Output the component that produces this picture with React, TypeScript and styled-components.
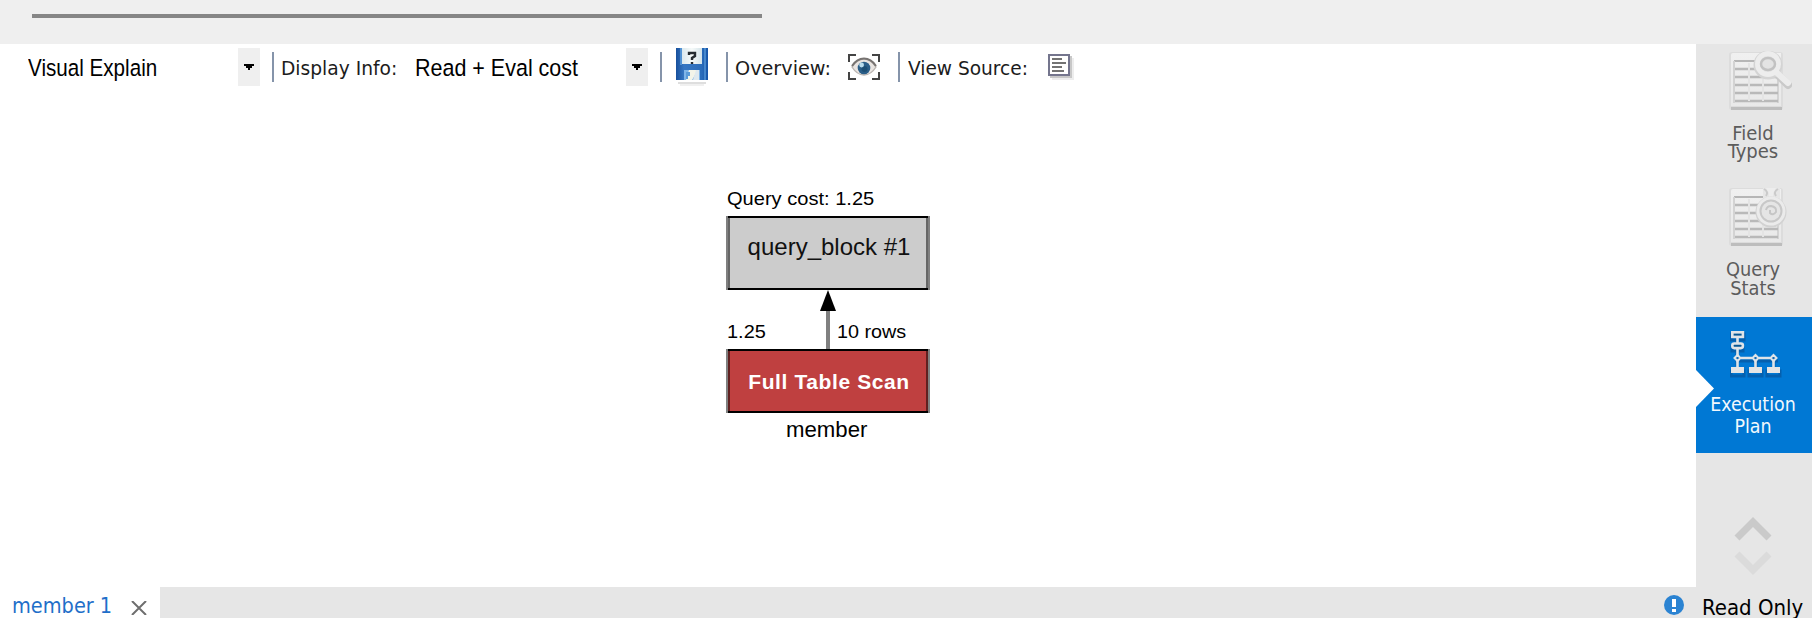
import React from 'react';
import styled, { createGlobalStyle } from 'styled-components';

const UI = '"DejaVu Sans Condensed", "DejaVu Sans", sans-serif';
const ARIAL = '"Liberation Sans", Arial, sans-serif';

const GlobalStyle = createGlobalStyle`
  body { margin: 0; background: #fff; }
  * { box-sizing: border-box; }
  svg { display: block; flex: none; }
`;

const Window = styled.div`
  width: 1812px;
  height: 618px;
  display: flex;
  flex-direction: column;
  overflow: hidden;
  color: #000;
`;

const TopStrip = styled.div`
  height: 44px;
  flex: none;
  padding: 14px 0 0 32px;
  background: #efefef;
`;

const ScrollThumb = styled.div`
  width: 730px;
  height: 4px;
  background: #868686;
`;

const Main = styled.div`
  height: 543px;
  flex: none;
  display: flex;
`;

const Content = styled.main`
  width: 1696px;
  display: flex;
  flex-direction: column;
  background: #fff;
`;

const Toolbar = styled.div`
  height: 42px;
  padding: 4px 0 0 28px;
  display: flex;
  align-items: center;
`;

const Select = styled.div<{ $width: number }>`
  width: ${p => p.$width}px;
  height: 38px;
  display: flex;
  justify-content: space-between;
  align-items: center;
`;

const SelectText = styled.span<{ $scale: number }>`
  font: 24.5px/38px ${ARIAL};
  padding-top: 1px;
  white-space: nowrap;
  transform: scaleX(${p => p.$scale});
  transform-origin: left;
`;

const SelectButton = styled.span`
  width: 22px;
  height: 38px;
  margin-left: -30px;
  flex: none;
  display: flex;
  align-items: center;
  justify-content: center;
  background: #efefef;
`;

const Separator = styled.span<{ $before: number; $after: number }>`
  width: 2px;
  height: 30px;
  flex: none;
  margin: 0 ${p => p.$after}px 0 ${p => p.$before}px;
  background: #8594aa;
`;

const ToolLabel = styled.span<{ $width: number; $scale: number }>`
  width: ${p => p.$width}px;
  flex: none;
  padding-top: 4px;
  font: 18.6px/34px ${UI};
  color: #1c1c1c;
  white-space: nowrap;
  transform: scaleX(${p => p.$scale});
  transform-origin: left;
`;

const Canvas = styled.div`
  position: relative;
  flex: 1;
`;

const Node = styled.div<{ $top: number; $height: number; $fill: string; $edge: string; $ink: string; $bold?: boolean; $line: number }>`
  position: absolute;
  left: 726px;
  top: ${p => p.$top}px;
  width: 204px;
  height: ${p => p.$height}px;
  padding: 2px 0 0 2px;
  background:
    linear-gradient(#000, #000) 2px 0 / 200px 2px no-repeat,
    linear-gradient(#000, #000) 2px 100% / 200px 2px no-repeat,
    linear-gradient(90deg, #808080 2px, ${p => p.$edge} 2px 4px, ${p => p.$fill} 4px 200px, ${p => p.$edge} 200px 202px, #808080 202px);
  color: ${p => p.$ink};
  font: ${p => (p.$bold ? 'bold 21px' : '24px')}/${p => p.$line}px ${ARIAL};
  letter-spacing: ${p => (p.$bold ? '0.6px' : '0')};
  text-align: center;
  white-space: nowrap;
`;

const Caption = styled.span<{ $x: number; $y: number; $size: number; $scale?: number }>`
  position: absolute;
  left: ${p => p.$x}px;
  top: ${p => p.$y}px;
  font: ${p => p.$size}px/24px ${ARIAL};
  white-space: nowrap;
  transform: scaleX(${p => p.$scale ?? 1});
  transform-origin: left;
`;

const Connector = styled.svg`
  position: absolute;
  left: 818px;
  top: 204px;
`;

const Sidebar = styled.aside`
  width: 116px;
  display: flex;
  flex-direction: column;
  background: #e6e6e6;
`;

const SideItem = styled.div<{ $height: number; $pad: number; $active?: boolean }>`
  position: relative;
  height: ${p => p.$height}px;
  padding-top: ${p => p.$pad}px;
  flex: none;
  display: flex;
  flex-direction: column;
  align-items: center;
  background: ${p => (p.$active ? '#0078d4' : 'transparent')};
  color: ${p => (p.$active ? '#f2f8fd' : '#5c5c5c')};
`;

const SideGlyph = styled.div<{ $shift: number }>`
  margin-left: ${p => p.$shift}px;
`;

const SideLabel = styled.span<{ $gap: number; $line: number; $size: number }>`
  margin-top: ${p => p.$gap}px;
  width: 112px;
  margin-left: -2px;
  text-align: center;
  font: ${p => p.$size}px/${p => p.$line}px ${UI};
`;

const Notch = styled.svg`
  position: absolute;
  left: 0;
  top: 53px;
`;

const Chevrons = styled.div`
  margin: 63px 0 0 38px;
`;

const StatusBar = styled.footer`
  height: 31px;
  flex: none;
  display: flex;
  background: #e6e6e6;
`;

const ResultTab = styled.div`
  width: 160px;
  display: flex;
  background: #fff;
`;

const TabTitle = styled.span`
  width: 119px;
  padding-left: 12px;
  font: 21.5px/37px ${UI};
  color: #1f6fc9;
  white-space: nowrap;
`;

const CloseIcon = styled.svg`
  margin: 14px 0 0 12px;
`;

const Status = styled.div`
  margin-left: auto;
  width: 148px;
  display: flex;
`;

const StatusText = styled.span`
  margin-left: 18px;
  font: 22px/41px ${UI};
  white-space: nowrap;
`;

const InfoIcon = styled.svg`
  margin-top: 8px;
`;

const Caret = () => (
  <svg width="10" height="6" shapeRendering="crispEdges"><path d="M0 0h10v2h-2v2h-2v2h-2v-2h-2v-2h-2z" fill="#000" /></svg>
);

const FloppyIcon = () => (
  <svg width="34" height="38" viewBox="0 0 34 38">
    <defs>
      <linearGradient id="disk" x1="0" x2="1"><stop offset="0" stopColor="#174f9c" /><stop offset=".25" stopColor="#3677c3" /><stop offset=".8" stopColor="#2a6cba" /><stop offset="1" stopColor="#1554a8" /></linearGradient>
      <linearGradient id="sheet" x1="0" x2="1"><stop offset="0" stopColor="#dce9ee" /><stop offset=".5" stopColor="#f6faf9" /><stop offset="1" stopColor="#d4e3e9" /></linearGradient>
    </defs>
    <rect x="2" y="34" width="28" height="2" fill="#dedede" /><rect x="4" y="36" width="24" height="2" fill="#f0f0f0" />
    <rect width="32" height="32" fill="url(#disk)" />
    <rect x="4" width="2" height="17" fill="#65a5df" opacity=".7" /><rect x="28" width="2" height="32" fill="#5b9ddb" opacity=".65" />
    <rect x="6" width="20" height="16" fill="url(#sheet)" />
    <path d="M13 7V5h6v3l-3 2v2M16 14v2" fill="none" stroke="#252c31" strokeWidth="2.4" />
    <rect x="8" y="22" width="16" height="10" fill="#80b5e8" />
    <path d="M13 22h9l-6 10h-6z" fill="#f3f4e9" /><path d="M20 22h3v10h-6z" fill="#dfe9ef" />
    <path d="M10 24h4v4h-2v3h-2z" fill="#5b9bd8" />
  </svg>
);

const EyeIcon = () => (
  <svg width="32" height="26" viewBox="0 0 32 26">
    <path d="M1 8V1h7M24 1h7v7M31 18v7h-7M8 25H1v-7" fill="none" stroke="#444" strokeWidth="2" />
    <path d="M4 13Q9 5 16 5t12 8q-5 8-12 8T4 13z" fill="#e9e5e2" stroke="#bbb5b1" strokeWidth="1.4" />
    <path d="M4 12Q9 4.600 16 4.600T28 12" fill="none" stroke="#777371" strokeWidth="2" />
    <circle cx="16" cy="14" r="6.300" fill="#2b5e88" /><circle cx="16.500" cy="15" r="3" fill="#1d4f75" /><circle cx="13.600" cy="11" r="2.400" fill="#b9dcec" />
  </svg>
);

const SourceIcon = () => (
  <svg width="26" height="26" viewBox="0 0 26 26" shapeRendering="crispEdges">
    <path d="M22 2h2v22H2v-2h20z" fill="#c8c8c8" /><path d="M24 4h2v22H4v-2h20z" fill="#ededed" />
    <rect x="1" y="1" width="20" height="20" fill="#fff" stroke="#74758d" strokeWidth="2" />
    <path d="M4 5h10M4 9h14M4 13h10M4 17h12" stroke="#737373" strokeWidth="2" />
  </svg>
);

const Sheet = ({ id }: { id: string }) => (
  <>
    <defs><linearGradient id={id} x1="0" y1="0" x2="0" y2="1"><stop offset="0" stopColor="#f0f0f0" /><stop offset="1" stopColor="#e9e9e9" /></linearGradient></defs>
    <rect x="1" y="1" width="54" height="58" rx="3" fill="#dcdcdc" />
    <rect x="3" y="56" width="51" height="3" fill="#bdbdbd" />
    <path d="M5 2h48v53H3V4q0-2 2-2z" fill={`url(#${id})`} />
    <path d="M6 10h44" stroke="#b6b6b6" strokeWidth="2" />
    <path d="M6 10v42M50 20v32" stroke="#d3d3d3" strokeWidth="2" />
    <path d="M7 18h43M7 26h43M7 34h43M7 42h43M7 50h43" stroke="#b9b9b9" strokeWidth="2.400" />
    <path d="M21 12v38M35 12v38" stroke="#e4e4e4" strokeWidth="2" />
  </>
);

const FieldTypesIcon = () => (
  <svg width="64" height="62" viewBox="0 0 64 62">
    <Sheet id="sheetField" />
    <path d="M49 23L60 34" stroke="#c9c9c9" strokeWidth="8" strokeLinecap="round" />
    <circle cx="40" cy="14" r="14.500" fill="#d4d4d4" />
    <path d="M48 21L60 32" stroke="#ececec" strokeWidth="6" strokeLinecap="round" />
    <circle cx="40" cy="13" r="10.500" fill="#e1e1e1" stroke="#ededed" strokeWidth="5" />
    <ellipse cx="40" cy="13" rx="7" ry="6" fill="#e3e3e3" stroke="#c2c2c2" strokeWidth="2.500" />
  </svg>
);

const QueryStatsIcon = () => (
  <svg width="64" height="62" viewBox="0 0 64 62">
    <Sheet id="sheetStats" />
    <path d="M35 1h17v12H35z" fill="#e6e6e6" /><path d="M36 2q5 3 2 7M50 2q-5 3-2 7" fill="none" stroke="#cacaca" strokeWidth="2" />
    <path d="M38 1h10l-3 5v5h-4V6z" fill="#ededed" />
    <circle cx="43" cy="25" r="15.500" fill="#d2d2d2" />
    <circle cx="43" cy="24" r="14.500" fill="#ebebeb" />
    <circle cx="43" cy="24" r="10.500" fill="#e5e5e5" stroke="#c8c8c8" strokeWidth="2" />
    <path d="M38 23q1-4 5-4 6 1 5 6-3 4-6 1v-3" fill="none" stroke="#c6c6c6" strokeWidth="2" />
  </svg>
);

const PlanIcon = () => (
  <svg width="54" height="48" viewBox="0 0 54 48">
    <g fill="none" stroke="#07539a" strokeOpacity=".65" strokeWidth="3" transform="translate(0 2)">
      <path d="M1 1h13v6H1zM2 14h11v4H2zM7 7v26M8 28h40M26 28v8M44 28v8" /><path d="M1 38h13v5H1zM19 38h13v5H19zM37 38h13v5H37z" />
    </g>
    <g fill="none" stroke="#e0e4e8" strokeWidth="2.600">
      <path d="M7.500 7v5M7.500 18v6M11 27h11M29 27h11M7.500 30v6M25.500 30v6M43.500 30v6" />
      <rect x="2.300" y="1.300" width="10.600" height="4.600" fill="#075794" />
      <rect x="2.300" y="12.500" width="10.600" height="4.600" rx="2" fill="#075794" />
      <g strokeWidth="2"><path d="M7.500 24l3 3-3 3-3-3zM25.500 24l3 3-3 3-3-3zM43.500 24l3 3-3 3-3-3z" fill="#1169b4" /></g>
    </g>
    <path d="M1 36h13v6H1zM19 36h13v6H19zM37 36h13v6H37z" fill="#e5e5e5" />
  </svg>
);

export default function App() {
  return (
    <Window>
      <GlobalStyle />
      <TopStrip><ScrollThumb /></TopStrip>
      <Main>
        <Content>
          <Toolbar>
            <Select $width={232}><SelectText $scale={0.842}>Visual Explain</SelectText><SelectButton><Caret /></SelectButton></Select>
            <Separator $before={12} $after={7} />
            <ToolLabel $width={134} $scale={1.115}>Display Info:</ToolLabel>
            <Select $width={233}><SelectText $scale={0.877}>Read + Eval cost</SelectText><SelectButton><Caret /></SelectButton></Select>
            <Separator $before={12} $after={14} />
            <FloppyIcon />
            <Separator $before={16} $after={7} />
            <ToolLabel $width={113} $scale={1.15}>Overview:</ToolLabel>
            <EyeIcon />
            <Separator $before={18} $after={8} />
            <ToolLabel $width={140} $scale={1.11}>View Source:</ToolLabel>
            <SourceIcon />
          </Toolbar>
          <Canvas>
            <Caption $x={727} $y={101} $size={18.5} $scale={1.085}>Query cost: 1.25</Caption>
            <Node $top={130} $height={74} $fill="#ccc" $edge="#666" $ink="#111" $line={58}>query_block #1</Node>
            <Connector width="20" height="60"><path d="M8 20h4v40H8z" fill="#808080" /><path d="M10 0l8 21H2z" fill="#000" /></Connector>
            <Caption $x={727} $y={234} $size={19} $scale={1.05}>1.25</Caption>
            <Caption $x={837} $y={234} $size={19} $scale={1.04}>10 rows</Caption>
            <Node $top={263} $height={64} $fill="#bf4040" $edge="#602020" $ink="#fff" $bold $line={61}>Full Table Scan</Node>
            <Caption $x={786} $y={332} $size={22.2}>member</Caption>
          </Canvas>
        </Content>
        <Sidebar>
          <SideItem $height={135} $pad={7}><SideGlyph $shift={12}><FieldTypesIcon /></SideGlyph><SideLabel $gap={11} $line={18} $size={20}>Field<br />Types</SideLabel></SideItem>
          <SideItem $height={138} $pad={8}><SideGlyph $shift={12}><QueryStatsIcon /></SideGlyph><SideLabel $gap={11} $line={19} $size={19.8}>Query<br />Stats</SideLabel></SideItem>
          <SideItem $height={136} $pad={14} $active>
            <SideGlyph $shift={6}><PlanIcon /></SideGlyph><SideLabel $gap={15} $line={22} $size={19.4}>Execution<br />Plan</SideLabel>
            <Notch width="18" height="38"><path d="M0 0l18 18.500L0 37z" fill="#fff" /></Notch>
          </SideItem>
          <Chevrons>
            <svg width="40" height="62" viewBox="0 0 40 62" fill="none" strokeWidth="7">
              <path d="M3 22L19 6l16 16" stroke="#cacaca" /><path d="M3 38l16 16 16-16" stroke="#dbdbdb" />
            </svg>
          </Chevrons>
        </Sidebar>
      </Main>
      <StatusBar>
        <ResultTab>
          <TabTitle>member 1</TabTitle>
          <CloseIcon width="16" height="14"><path d="M1 0l14 14M15 0L1 14" stroke="#6e6e6e" strokeWidth="2" /></CloseIcon>
        </ResultTab>
        <Status>
          <InfoIcon width="20" height="20"><circle cx="10" cy="10" r="10" fill="#2b83d2" /><path d="M8 4h4v8H8zM8 14h4v3H8z" fill="#fff" /></InfoIcon>
          <StatusText>Read Only</StatusText>
        </Status>
      </StatusBar>
    </Window>
  );
}
